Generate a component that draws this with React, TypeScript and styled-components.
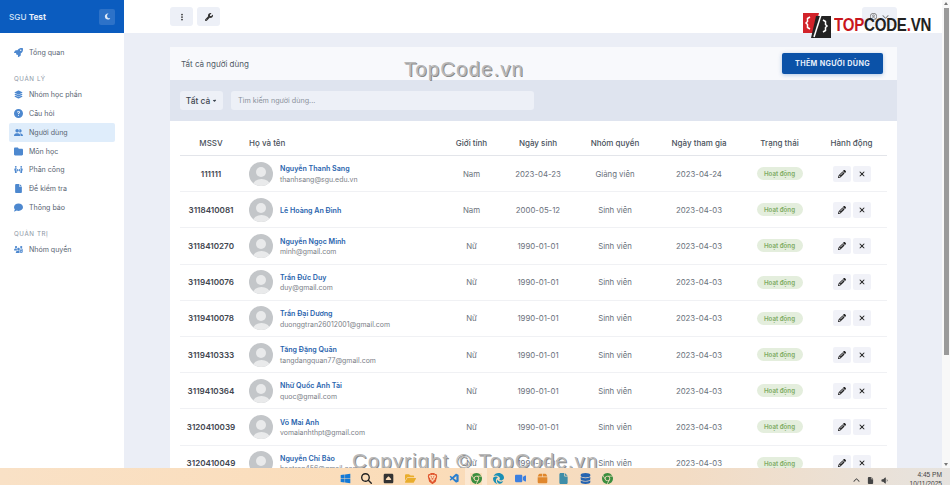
import React from "react";
import styled, { createGlobalStyle } from "styled-components";
import {
  FaRocket, FaLayerGroup, FaCircleQuestion, FaUserGroup, FaFolder, FaPeopleArrows,
  FaFile, FaComment, FaUsersGear, FaEllipsisVertical, FaWrench, FaPencil, FaXmark, FaMoon,
  FaCaretDown, FaRegCircleUser, FaChevronDown, FaChevronUp, FaVolumeLow, FaMagnifyingGlass, FaChrome, FaEdge, FaWindows,
  FaFolderOpen, FaDatabase, FaBox, FaVideo, FaSquareCaretUp,
} from "react-icons/fa6";
import { VscVscode } from "react-icons/vsc";
import { SiBrave } from "react-icons/si";

const Global = createGlobalStyle`
  html, body { margin: 0; padding: 0; height: 485px; overflow: hidden; background: #ebeef6; }
  * { box-sizing: border-box; }
  body { font-family: Inter, "Noto Sans", sans-serif; color: #444; }
`;

const Screen = styled.div`
  width: 950px; height: 485px; position: relative; overflow: hidden;
  display: flex; background: #ebeef6;
`;
const Sidebar = styled.aside`
  width: 124px; flex: none; background: #fff; display: flex; flex-direction: column;
`;
const Brand = styled.div`
  height: 33px; background: #0b5cbf; color: #d5e3f6; display: flex; align-items: center;
  justify-content: space-between; padding: 0 9px; font-size: 8.2px; font-weight: 500;
  b { font-weight: 700; color: #e9f0fa; }
`;
const MoonButton = styled.div`
  width: 16px; height: 16px; border-radius: 2px; background: #2d72c8; color: #dfe9f7;
  display: flex; align-items: center; justify-content: center; font-size: 7px;
`;
const Nav = styled.nav`
  display: flex; flex-direction: column; padding: 10px 9px 0;
`;
const NavItem = styled.div<{ $active?: boolean }>`
  height: 18.8px; display: flex; align-items: center; gap: 6px; padding-left: 5px;
  font-size: 7.05px; color: #5a6573; border-radius: 2px;
  background: ${(p) => (p.$active ? "#dfedfb" : "transparent")};
  svg { width: 9px; height: 9px; color: #4d88cf; flex: none; }
`;
const NavLabel = styled.div<{ $top: number }>`
  font-size: 6.2px; color: #8a94a3; letter-spacing: 0.6px; padding-left: 5px;
  margin-top: ${(p) => p.$top}px; height: 11px; line-height: 11px; margin-bottom: 1.5px;
`;
const Right = styled.div`
  flex: 1; min-width: 0; display: flex; flex-direction: column;
`;
const Topbar = styled.header`
  height: 33px; flex: none; background: #fff; display: flex; align-items: center;
  padding-left: 46px; padding-right: 53px; gap: 4px;
`;
const TopButton = styled.div`
  width: 23px; height: 19px; border-radius: 3px; background: #edf0f7; color: #333;
  display: flex; align-items: center; justify-content: center; font-size: 8px;
`;
const UserButton = styled(TopButton)`
  width: 35px; margin-left: auto; gap: 5px; color: #777; font-size: 7px;
`;
const Main = styled.main`
  flex: 1; min-height: 0; padding: 14px 53px 0 46px; overflow: hidden;
`;
const Card = styled.section`
  background: #fff; border-radius: 2px 2px 0 0;
`;
const CardHead = styled.div`
  height: 33px; background: #f8f9fc; display: flex; align-items: center;
  justify-content: space-between; padding: 0 14px 0 11px; font-size: 8px; color: #505a66;
`;
const AddButton = styled.div`
  width: 101px; height: 21px; border-radius: 2px; background: #0b52a8; color: #e6eef9;
  display: flex; align-items: center; justify-content: center; font-size: 7.2px; font-weight: 700;
  letter-spacing: 0.35px; box-shadow: 0 1px 4px rgba(11, 82, 168, 0.3);
`;
const FilterBar = styled.div`
  height: 41px; background: #dfe4ef; display: flex; align-items: center; gap: 8px; padding: 0 10px;
`;
const FilterButton = styled.div`
  width: 43px; height: 19px; background: #edf0f7; border-radius: 3px; font-size: 8.4px;
  font-weight: 500; color: #3d4650; display: flex; align-items: center; justify-content: center; gap: 2px;
  svg { width: 5px; height: 5px; }
`;
const SearchBox = styled.div`
  width: 303px; height: 19px; background: #edf0f7; border-radius: 3px; font-size: 7.2px;
  color: #8a919b; display: flex; align-items: center; padding-left: 7px;
`;
const TableWrap = styled.div`
  padding: 4px 10px 0;
`;
const Table = styled.table`
  width: 707px; border-collapse: collapse; table-layout: fixed; font-size: 8px;
`;
const Th = styled.th<{ $left?: boolean; $id?: boolean }>`
  height: 30.5px; font-weight: 500; font-size: 8px; color: #4a525c; padding: 6px ${(p) => (p.$id ? 7 : 0)}px 0 0;
  text-align: ${(p) => (p.$left ? "left" : "center")};
  border-bottom: 1px solid #e3e5ea;
`;
const Tr = styled.tr`
  height: 36.2px;
`;
const Td = styled.td<{ $left?: boolean }>`
  padding: 0; color: #6a717b; text-align: ${(p) => (p.$left ? "left" : "center")};
  border-bottom: 1px solid #f0f1f4; font-size: 7.8px; white-space: nowrap;
`;
const IdCell = styled(Td)`
  font-weight: 600; color: #3f464f; font-size: 8.1px; padding-right: 7px;
`;
const UserCell = styled.div`
  display: flex; align-items: center; gap: 7px;
`;
const Avatar = styled.div`
  width: 24px; height: 24px; border-radius: 50%; background: #c3c6c9; position: relative;
  overflow: hidden; flex: none;
  &::before { content: ""; position: absolute; left: 7px; top: 5px; width: 10px; height: 10px; border-radius: 50%; background: #e9eaeb; }
  &::after { content: ""; position: absolute; left: 3.5px; top: 17px; width: 17px; height: 12px; border-radius: 50%; background: #e9eaeb; }
`;
const Names = styled.div`
  display: flex; flex-direction: column; gap: 1.5px; padding-top: 1px;
`;
const Name = styled.div`
  color: #2863ad; font-size: 7.1px; font-weight: 600; line-height: 9px;
`;
const Email = styled.div`
  color: #7b8087; font-size: 6.95px; line-height: 9px;
`;
const Badge = styled.span`
  display: inline-block; width: 46px; height: 13px; line-height: 13px; border-radius: 7px;
  background: #e4eedd; color: #7eab64; font-size: 6.2px; font-weight: 600;
`;
const Actions = styled.div`
  display: flex; justify-content: center; gap: 2px;
`;
const ActionButton = styled.div`
  width: 18px; height: 16px; border-radius: 2px; background: #f1f2f8; color: #222;
  display: flex; align-items: center; justify-content: center; font-size: 8px;
`;
const Scrollbar = styled.div`
  position: absolute; right: 0; top: 0; bottom: 17px; width: 8px; background: #f8f8f8;
  display: flex; flex-direction: column; align-items: center; justify-content: space-between; padding: 2px 0 2px;
`;
const Thumb = styled.div`
  width: 5px; height: 347px; margin-top: 3px; background: #9a9a9a; margin-bottom: auto;
`;
const Arrow = styled.div<{ $up?: boolean }>`
  width: 0; height: 0; border-left: 2.5px solid transparent; border-right: 2.5px solid transparent;
  ${(p) => (p.$up ? "border-bottom: 3px solid #777;" : "border-top: 3px solid #777;")}
`;
const Watermark = styled.div<{ $x: number; $y: number }>`
  position: absolute; left: ${(p) => p.$x}px; top: ${(p) => p.$y}px; font-size: 20.5px;
  font-family: "Liberation Sans", sans-serif; color: #b8b8b8; letter-spacing: 1.05px; white-space: nowrap;
  text-shadow: 1px 1px 0 #8a8a8a; line-height: 1;
`;
const Logo = styled.div`
  position: absolute; left: 803px; top: 12px; height: 26px; display: flex; align-items: center; gap: 2px;
`;
const LogoText = styled.span`
  font-family: "Liberation Sans", sans-serif; font-weight: 700; font-size: 17.5px; letter-spacing: -0.25px;
  color: #222; transform: scaleX(0.86); transform-origin: left center; margin-left: 1px; white-space: nowrap;
  i { font-style: normal; color: #c8161d; }
`;
const Taskbar = styled.footer`
  position: absolute; left: 0; right: 0; bottom: 0; height: 17px;
  background: linear-gradient(90deg, #f9e1c6 0%, #fbdcb8 45%, #f3dcc4 72%, #e6e3df 100%);
`;
const TaskIcons = styled.div`
  display: flex; align-items: center; gap: 9.9px; position: absolute; left: 339px; top: 4px; height: 13px;
`;
const TaskIcon = styled.div<{ $c: string; $on?: boolean }>`
  width: 12px; height: 12px; color: ${(p) => p.$c}; display: flex; align-items: center; justify-content: center;
  font-size: 11px; flex: none; position: relative;
  ${(p) => (p.$on ? "box-shadow: 0 0 0 5px rgba(255,255,255,0.35);" : "")}
`;
const Tray = styled.div`
  position: absolute; right: 8px; top: 0; height: 17px; display: flex; align-items: center; gap: 6px;
  color: #444; font-size: 7px;
`;
const TrayIcons = styled.div`
  display: flex; align-items: center; gap: 7px; margin-top: 7px;
`;
const Clock = styled.div`
  text-align: right; font-family: "Liberation Sans", sans-serif; font-size: 6.6px; line-height: 8.5px;
  margin-left: 15px; color: #444; padding-top: 3px; height: 17px; white-space: nowrap;
`;

const users: [string, string, string, string, string][] = [
  ["111111", "Nguyễn Thanh Sang", "thanhsang@sgu.edu.vn", "Nam", "2023-04-23"],
  ["3118410081", "Lê Hoàng An Đình", "", "Nam", "2000-05-12"],
  ["3118410270", "Nguyễn Ngọc Minh", "minh@gmail.com", "Nữ", "1990-01-01"],
  ["3119410076", "Trần Đức Duy", "duy@gmail.com", "Nữ", "1990-01-01"],
  ["3119410078", "Trần Đại Dương", "duonggtran26012001@gmail.com", "Nữ", "1990-01-01"],
  ["3119410333", "Tăng Đặng Quân", "tangdangquan77@gmail.com", "Nữ", "1990-01-01"],
  ["3119410364", "Nhữ Quốc Anh Tài", "quoc@gmail.com", "Nữ", "1990-01-01"],
  ["3120410039", "Võ Mai Anh", "vomaianhthpt@gmail.com", "Nữ", "1990-01-01"],
  ["3120410049", "Nguyễn Chí Bảo", "baotran456@gmail.com", "Nữ", "1990-01-01"],
];

const widths = [69, 193, 59, 74, 80, 88, 73, 71];

export default function App() {
  return (
    <Screen>
      <Global />
      <Sidebar>
        <Brand>
          <span>SGU <b>Test</b></span>
          <MoonButton><FaMoon /></MoonButton>
        </Brand>
        <Nav>
          <NavItem><FaRocket />Tổng quan</NavItem>
          <NavLabel $top={11}>QUẢN LÝ</NavLabel>
          <NavItem><FaLayerGroup />Nhóm học phần</NavItem>
          <NavItem><FaCircleQuestion />Câu hỏi</NavItem>
          <NavItem $active><FaUserGroup />Người dùng</NavItem>
          <NavItem><FaFolder />Môn học</NavItem>
          <NavItem><FaPeopleArrows />Phân công</NavItem>
          <NavItem><FaFile />Đề kiểm tra</NavItem>
          <NavItem><FaComment />Thông báo</NavItem>
          <NavLabel $top={11}>QUẢN TRỊ</NavLabel>
          <NavItem><FaUsersGear />Nhóm quyền</NavItem>
        </Nav>
      </Sidebar>
      <Right>
        <Topbar>
          <TopButton><FaEllipsisVertical /></TopButton>
          <TopButton><FaWrench /></TopButton>
          <UserButton><FaRegCircleUser /><FaChevronDown /></UserButton>
        </Topbar>
        <Main>
          <Card>
            <CardHead>
              <span>Tất cả người dùng</span>
              <AddButton>THÊM NGƯỜI DÙNG</AddButton>
            </CardHead>
            <FilterBar>
              <FilterButton>Tất cả <FaCaretDown /></FilterButton>
              <SearchBox>Tìm kiếm người dùng...</SearchBox>
            </FilterBar>
            <TableWrap>
              <Table>
                <colgroup>
                  {widths.map((w, i) => <col key={i} width={w} />)}
                </colgroup>
                <thead>
                  <tr>
                    <Th $id>MSSV</Th>
                    <Th $left>Họ và tên</Th>
                    <Th>Giới tính</Th>
                    <Th>Ngày sinh</Th>
                    <Th>Nhóm quyền</Th>
                    <Th>Ngày tham gia</Th>
                    <Th>Trạng thái</Th>
                    <Th>Hành động</Th>
                  </tr>
                </thead>
                <tbody>
                  {users.map((u, i) => (
                    <Tr key={u[0]}>
                      <IdCell>{u[0]}</IdCell>
                      <Td $left>
                        <UserCell>
                          <Avatar />
                          <Names>
                            <Name>{u[1]}</Name>
                            {u[2] && <Email>{u[2]}</Email>}
                          </Names>
                        </UserCell>
                      </Td>
                      <Td>{u[3]}</Td>
                      <Td>{u[4]}</Td>
                      <Td>{i === 0 ? "Giảng viên" : "Sinh viên"}</Td>
                      <Td>{i === 0 ? "2023-04-24" : "2023-04-03"}</Td>
                      <Td><Badge>Hoạt động</Badge></Td>
                      <Td>
                        <Actions>
                          <ActionButton><FaPencil /></ActionButton>
                          <ActionButton><FaXmark /></ActionButton>
                        </Actions>
                      </Td>
                    </Tr>
                  ))}
                </tbody>
              </Table>
            </TableWrap>
          </Card>
        </Main>
      </Right>
      <Scrollbar><Arrow $up /><Thumb /><Arrow /></Scrollbar>
      <Watermark $x={404} $y={59}>TopCode.vn</Watermark>
      <Watermark $x={352} $y={451}>Copyright © TopCode.vn</Watermark>
      <Logo>
        <svg width="28" height="26" viewBox="0 0 28 26">
          <path d="M0 1h16l-5 20H0z" fill="#d2232a" />
          <path d="M13 4h15v22H8z" fill="#222" />
          <path d="M18 3 11 25" stroke="#fff" strokeWidth="1.5" />
          <path d="M7 5 4.500 6.500v3L3 11l1.500 1.500v3L7 17" stroke="#fff" strokeWidth="1.5" fill="none" />
          <path d="M20 8l2.500 1.500v3L24 14l-1.500 1.500v3L20 20" stroke="#fff" strokeWidth="1.5" fill="none" />
        </svg>
        <LogoText><i>TOP</i>CODE<i>.</i>VN</LogoText>
      </Logo>
      <Taskbar>
        <TaskIcons>
          <TaskIcon $c="#1479d6"><FaWindows /></TaskIcon>
          <TaskIcon $c="#222"><FaMagnifyingGlass /></TaskIcon>
          <TaskIcon $c="#333"><FaSquareCaretUp /></TaskIcon>
          <TaskIcon $c="#e9ad2c"><FaFolderOpen /></TaskIcon>
          <TaskIcon $c="#e0552d"><SiBrave /></TaskIcon>
          <TaskIcon $c="#2a7fcf"><VscVscode /></TaskIcon>
          <TaskIcon $c="#3b8e3f" $on><FaChrome /></TaskIcon>
          <TaskIcon $c="#1a8fb5"><FaEdge /></TaskIcon>
          <TaskIcon $c="#3c7fe0"><FaVideo /></TaskIcon>
          <TaskIcon $c="#e0872d"><FaBox /></TaskIcon>
          <TaskIcon $c="#3f8da8"><FaFile /></TaskIcon>
          <TaskIcon $c="#2664b0"><FaDatabase /></TaskIcon>
          <TaskIcon $c="#3b8e3f"><FaChrome /></TaskIcon>
        </TaskIcons>
        <Tray>
          <TrayIcons>
            <FaChevronUp />
            <FaFile />
            <FaVolumeLow />
          </TrayIcons>
          <Clock>4:45 PM<br />10/11/2025</Clock>
        </Tray>
      </Taskbar>
    </Screen>
  );
}
